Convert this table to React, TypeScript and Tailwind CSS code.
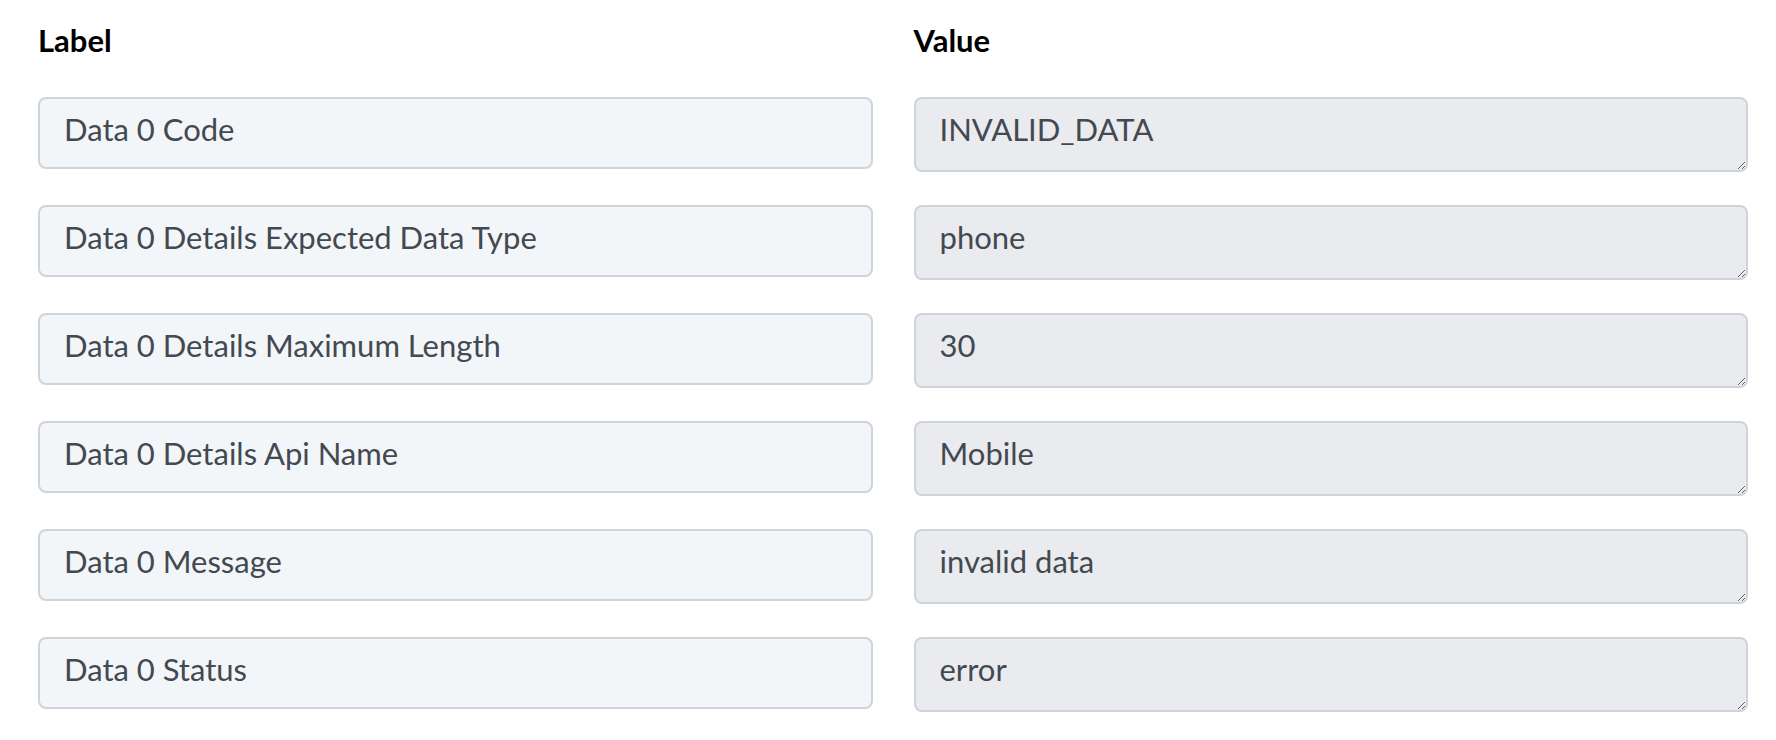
const rows = [
  { label: 'Data 0 Code', value: 'INVALID_DATA' },
  { label: 'Data 0 Details Expected Data Type', value: 'phone' },
  { label: 'Data 0 Details Maximum Length', value: '30' },
  { label: 'Data 0 Details Api Name', value: 'Mobile' },
  { label: 'Data 0 Message', value: 'invalid data' },
  { label: 'Data 0 Status', value: 'error' },
]

export default function App() {
  return (
    <div className="min-h-screen bg-white pl-[38px] pr-[28px] font-['Lato','Open_Sans',sans-serif]">
      <div className="grid grid-cols-2 gap-x-[41px]">
        <h2 className="pt-[20px] h-[97px] text-[31px] font-bold text-black leading-[40px]">
          Label
        </h2>
        <h2 className="pt-[20px] h-[97px] text-[31px] font-bold text-black leading-[40px]">
          Value
        </h2>
      </div>
      <div className="grid grid-cols-2 gap-x-[41px] gap-y-[33px]">
        {rows.map((row) => (
          <Row key={row.label} label={row.label} value={row.value} />
        ))}
      </div>
    </div>
  )
}

function Row({ label, value }: { label: string; value: string }) {
  return (
    <>
      <input
        readOnly
        value={label}
        className="h-[72px] w-full rounded-[8px] border-2 border-[#cfd4da] bg-[#f3f6f9] px-[24px] pb-[9px] text-[31px] text-[#434951] outline-none"
      />
      <textarea
        readOnly
        value={value}
        className="block h-[75px] w-full rounded-[8px] border-2 border-[#cfd4da] bg-[#eaebee] px-[24px] pt-[10px] text-[31px] leading-[40px] text-[#434951] outline-none"
      />
    </>
  )
}
